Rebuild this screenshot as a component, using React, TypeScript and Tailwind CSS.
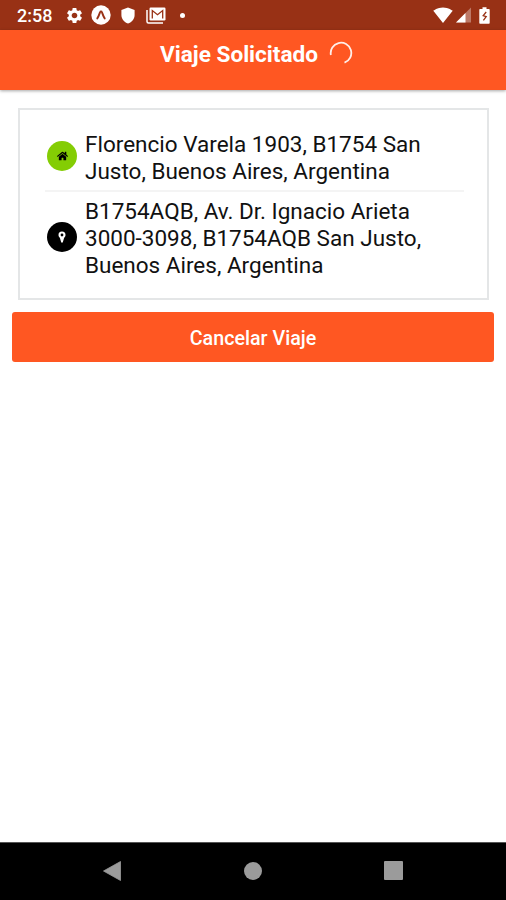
import type { ReactNode } from "react"
import { MdSettings, MdSignalWifi4Bar } from "react-icons/md"
import { FaHome } from "react-icons/fa"

interface Direccion {
    id: number
    lines: string[]
    row: string
    circle: string
    icon: ReactNode
}

const direcciones: Direccion[] = [
    {
        id: 1,
        lines: ["Florencio Varela 1903, B1754 San", "Justo, Buenos Aires, Argentina"],
        row: "border-b-2 border-[#f4f4f4] pt-px pb-[5px]",
        circle: "mt-[10px] bg-[#84cd04]",
        icon: <FaHome className="h-[10px] w-[11px] text-black" />,
    },
    {
        id: 2,
        lines: ["B1754AQB, Av. Dr. Ignacio Arieta", "3000-3098, B1754AQB San Justo,", "Buenos Aires, Argentina"],
        row: "pt-[6px]",
        circle: "mt-[24px] bg-black",
        icon: (
            <svg viewBox="0 0 8 12" className="h-3 w-2">
                <path d="M4 .5a3.5 3.5 0 0 0-3.5 3.6c0 1.3.8 2 1.5 3.1L3.1 11a.95.95 0 0 0 1.8 0L6 7.2c.7-1.1 1.5-1.8 1.5-3.1A3.5 3.5 0 0 0 4 .5Zm0 4.9a1.4 1.4 0 1 1 0-2.8 1.4 1.4 0 0 1 0 2.8Z" fill="#fff" />
            </svg>
        ),
    },
]

function StatusBar() {
    return (
        <div className="flex h-[30px] items-center bg-[#983115] pr-4 pl-[17px] text-white">
            <span className="w-[48px] pt-0.5 text-[18px] leading-none font-medium">2:58</span>
            <MdSettings className="h-[19px] w-[19px]" />
            <svg viewBox="0 0 20 20" className="ml-[7px] h-5 w-5">
                <circle cx="10" cy="10" r="9.7" fill="#fff" />
                <path d="M6.3 13.4c1.2-1.6 1.9-3.9 2.8-6.4.3-.9 1.5-.9 1.8 0 .9 2.5 1.6 4.8 2.8 6.4" fill="none" stroke="#983115" strokeWidth="1.9" strokeLinecap="round" strokeLinejoin="round" />
            </svg>
            <svg viewBox="0 0 14 17" className="ml-[10px] h-[17px] w-[14px]">
                <path d="M7 .5 13.6 3v5c0 4-2.7 7.1-6.6 8.5C3.1 15.1.4 12 .4 8V3L7 .5Z" fill="#fff" />
            </svg>
            <svg viewBox="0 0 20 17" className="ml-[11px] h-[17px] w-5">
                <path d="M1 3v11.5c0 .8.5 1.5 1.5 1.5H17" fill="none" stroke="#fff" strokeWidth="1.5" />
                <rect x="3.5" y=".5" width="16" height="13" rx="1.2" fill="#fff" />
                <path d="M6.3 11.5v-8l5.2 4.2 5.2-4.2v8" fill="none" stroke="#983115" strokeWidth="1.3" />
            </svg>
            <span className="ml-[14px] h-[5px] w-[5px] rounded-full bg-white" />
            <div className="ml-auto flex items-center">
                <MdSignalWifi4Bar className="h-5 w-5" />
                <svg viewBox="0 0 15 16" className="ml-[3px] h-4 w-[15px]">
                    <path d="M0 15.5 15 .5v15Z" fill="#fff" fillOpacity=".35" />
                    <path d="M0 15.5 9.5 6v9.5Z" fill="#fff" />
                </svg>
                <svg viewBox="0 0 11 17" className="ml-2 h-[17px] w-[11px]">
                    <path d="M1.3 2h2.2V.3h4V2h2.2c.6 0 1 .4 1 1v12.7c0 .6-.4 1-1 1H1.3c-.6 0-1-.4-1-1V3c0-.6.4-1 1-1Z" fill="#fff" />
                    <path d="M7.2 5 4.2 8.700l3 1-2.800 3.600" fill="none" stroke="#983115" strokeWidth="1.3" />
                </svg>
            </div>
        </div>
    )
}

function NavBar() {
    return (
        <div className="flex h-[58px] items-center justify-between border-t border-[#555] bg-black px-[103px] pb-0.5">
            <svg viewBox="0 0 18 20" className="h-5 w-[18px]">
                <path d="M17.5.5v19L.5 10Z" fill="#9b9b9b" stroke="#9b9b9b" strokeWidth=".8" strokeLinejoin="round" />
            </svg>
            <div className="h-[18px] w-[18px] rounded-full bg-[#9b9b9b]" />
            <div className="h-[19px] w-[19px] rounded-[1px] bg-[#9b9b9b]" />
        </div>
    )
}

export default function App() {
    return (
        <div className="flex h-[900px] w-[506px] flex-col overflow-hidden bg-white font-[Roboto,sans-serif]">
            <StatusBar />
            <header className="flex h-[60px] justify-center bg-[#ff5722] pt-[11px] pl-[7px] shadow-[0_1px_3px_rgba(0,0,0,0.35)]">
                <h1 className="text-[22.6px] leading-7 font-bold text-white">Viaje Solicitado</h1>
                <svg viewBox="0 0 24 24" className="ml-[11px] h-6 w-6">
                    <path d="M1.9 14A10.3 10.3 0 1 1 15.5 21.7" fill="none" stroke="#fff" strokeOpacity=".9" strokeWidth="1.8" />
                </svg>
            </header>

            <main className="flex-1 px-3 pt-[18px]">
                <section className="mr-[5px] ml-[6px] h-[192px] border-2 border-[#e4e6e7] pt-5 pr-[23px] pl-[25px]">
                    {direcciones.map((d) => (
                        <div key={d.id} className={`flex items-start ${d.row}`}>
                            <div className={`ml-[2px] flex h-[30px] w-[30px] items-center justify-center rounded-full ${d.circle}`}>
                                {d.icon}
                            </div>
                            <p className="ml-2 text-[22.5px] leading-[27px] whitespace-nowrap text-[#111]">
                                {d.lines.map((line) => (
                                    <span key={line} className="block">{line}</span>
                                ))}
                            </p>
                        </div>
                    ))}
                </section>
                <button className="mt-3 block h-[50px] w-full rounded-[3px] bg-[#ff5722] pt-[4px] text-[19.7px] font-medium text-white">
                    Cancelar Viaje
                </button>
            </main>
            <NavBar />
        </div>
    )
}
